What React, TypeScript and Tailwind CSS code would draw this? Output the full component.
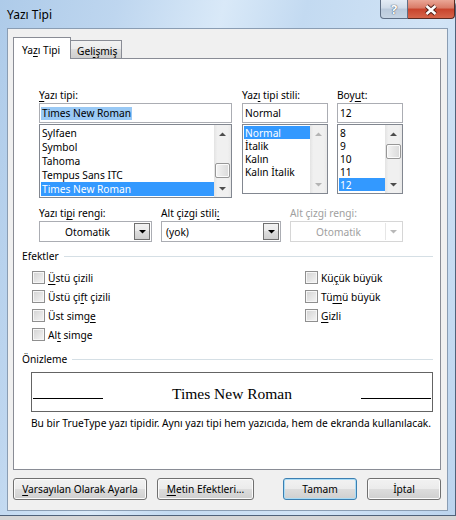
import React from "react";

const FONT = "font-['Noto_Sans',sans-serif]";

function U({ children }: { children: React.ReactNode }) {
  return <span className="underline underline-offset-[2px]">{children}</span>;
}

function Tri({ up = false, color = "#000" }: { up?: boolean; color?: string }) {
  return (
    <svg width="7" height="4" viewBox="0 0 7 4" className="block">
      <path d={up ? "M0 4L3.5 0.5L7 4Z" : "M0 0L7 0L3.5 3.5Z"} fill={color} />
    </svg>
  );
}

function ScrollBar({ thumbClass, disabled = false }: { thumbClass?: string; disabled?: boolean }) {
  const c = disabled ? "#b4b4b4" : "#4d4d4d";
  return (
    <div className="relative w-[17px] shrink-0 flex flex-col justify-between bg-[linear-gradient(to_right,#e3e3e3,#f0f0f0_20%,#f0f0f0_80%,#e8e8e8)]">
      <div className="h-[17px] flex items-center justify-center">
        <Tri up color={c} />
      </div>
      {thumbClass && (
        <div
          className={`absolute left-[1px] w-[15px] h-[15px] rounded-[2px] border border-[#979797] shadow-[inset_0_0_0_1px_#fbfbfb] bg-[linear-gradient(to_right,#f4f4f4,#e6e6e6_50%,#dadada)] ${thumbClass}`}
        />
      )}
      <div className="h-[17px] flex items-center justify-center">
        <Tri color={c} />
      </div>
    </div>
  );
}

function ListBox({
  items,
  selected,
  rowClass,
  heightClass,
  thumbClass,
  disabledBar,
}: {
  items: string[];
  selected: number;
  rowClass: string;
  heightClass: string;
  thumbClass?: string;
  disabledBar?: boolean;
}) {
  return (
    <div className={`mt-[1px] flex border border-[#828790] bg-white ${heightClass}`}>
      <div className="flex-1 min-w-0 pt-[1px] pl-[1px] overflow-hidden">
        {items.map((t, i) => (
          <div
            key={t}
            className={`${rowClass} flex items-center pl-[1px] whitespace-nowrap ${
              i === selected ? "bg-[#3399ff] text-white" : ""
            }`}
          >
            {t}
          </div>
        ))}
      </div>
      <ScrollBar thumbClass={thumbClass} disabled={disabledBar} />
    </div>
  );
}

function TextBox({ children }: { children: React.ReactNode }) {
  return (
    <div className="h-[20px] border border-[#abadb3] bg-white flex items-center pl-[1px] whitespace-nowrap">
      {children}
    </div>
  );
}

function Combo({
  text,
  center = false,
  disabled = false,
  className,
}: {
  text: string;
  center?: boolean;
  disabled?: boolean;
  className: string;
}) {
  return (
    <div
      className={`h-[21px] flex items-center p-[1px] bg-white border ${
        disabled ? "border-[#d6d6d6] text-[#a0a0a0]" : "border-[#abadb3]"
      } ${className}`}
    >
      <div className={`flex-1 ${center ? "text-center" : "pl-[3px]"}`}>{text}</div>
      {disabled ? (
        <div className="w-[16px] h-[17px] flex items-center justify-center border-l border-[#e6e6e6]">
          <Tri color="#b8b8b8" />
        </div>
      ) : (
        <div className="w-[16px] h-[17px] flex items-center justify-center border border-[#707070] bg-[linear-gradient(#f2f2f2,#ebebeb_45%,#dddddd_50%,#cfcfcf)]">
          <Tri />
        </div>
      )}
    </div>
  );
}

function GroupHeader({ children }: { children: React.ReactNode }) {
  return (
    <div className="w-[411px] h-[14px] flex items-center">
      <span>{children}</span>
      <div className="flex-1 h-px ml-[5px] bg-[#d5dfe5]" />
    </div>
  );
}

function Check({ children }: { children: React.ReactNode }) {
  return (
    <div className="h-[19px] flex items-center">
      <div className="w-[13px] h-[13px] border border-[#8f8f8f] shadow-[inset_0_0_0_1px_#f6f6f6] bg-[linear-gradient(135deg,#d2d2d2,#f5f5f5)]" />
      <span className="ml-[3px]">{children}</span>
    </div>
  );
}

function Btn({
  children,
  className,
  primary = false,
}: {
  children: React.ReactNode;
  className: string;
  primary?: boolean;
}) {
  return (
    <div
      className={`h-[22px] flex items-center justify-center rounded-[3px] border bg-[linear-gradient(#f2f2f2,#ebebeb_50%,#dddddd_50%,#cfcfcf)] ${
        primary
          ? "border-[#3c7fb1] shadow-[inset_0_0_0_1px_#a9dcf6]"
          : "border-[#707070] shadow-[inset_0_0_0_1px_#fbfbfb]"
      } ${className}`}
    >
      {children}
    </div>
  );
}

export default function App() {
  return (
    <div className={`w-[456px] h-[520px] bg-[#d6d6d6] ${FONT} text-[10.2px] leading-[14px] text-black`}>
      <div className="w-[456px] h-[516px] flex flex-col border-r border-b border-[#50627a] rounded-tr-[6px] bg-[linear-gradient(105deg,#aecbe9_0%,#bed6ef_20%,#d9e9f8_38%,#c3daf1_52%,#d2e4f6_75%,#bcd4ee_100%)]">
        {/* title bar */}
        <div className="h-[28px] flex items-start">
          <div className="flex-1 pl-[7px] pt-[6px] text-[12px] leading-[18px]">Yazı Tipi</div>
          <div className="w-[28px] h-[19px] flex items-center justify-center rounded-bl-[4px] border border-t-0 border-[#5f6f85] bg-[linear-gradient(#e4ecf5,#cfdbe8_45%,#b9c9db_50%,#c6d4e3)]">
            <span className="text-[13px] leading-[13px] font-bold text-white [text-shadow:0_0_1px_#3c4a5c,0_0_1px_#3c4a5c]">
              ?
            </span>
          </div>
          <div className="w-[47px] h-[19px] flex items-center justify-center rounded-br-[4px] border border-t-0 border-l-0 border-[#5a2a22] bg-[linear-gradient(#eaa696,#d97a66_45%,#c8432c_50%,#d6654b)]">
            <svg width="16" height="12" viewBox="0 0 16 12" className="mt-[1px]">
              <path d="M3.5 2L12.5 10M12.5 2L3.5 10" stroke="#4e1d15" strokeWidth="4.4" />
              <path d="M3.5 2L12.5 10M12.5 2L3.5 10" stroke="#ffffff" strokeWidth="2.6" />
            </svg>
          </div>
        </div>

        <div className="flex">
          <div className="w-[7px]" />
          <div className="w-[441px] h-[483px] border border-[#8a9db3] bg-[#f0f0f0] flex flex-col">
            {/* tabs */}
            <div className="mt-[8px] pl-[5px] h-[21px] flex items-end">
              <div className="relative z-10 -mb-px h-[22px] w-[58px] border border-b-0 border-[#898c95] bg-white pl-[8px] pt-[5px]">
                Ya<U>z</U>ı Tipi
              </div>
              <div className="-ml-px h-[18px] w-[52px] border border-b-0 border-[#898c95] bg-[linear-gradient(#f2f2f2,#ebebeb_50%,#dddddd_50%,#cfcfcf)] pl-[6px] pt-[3px]">
                Gel<U>i</U>şmiş
              </div>
            </div>

            {/* tab page */}
            <div className="ml-[5px] w-[428px] h-[412px] border border-[#898c95] bg-white pt-[29px] pl-[8px]">
              <div className="ml-[17px] flex items-start">
                <div className="w-[193px]">
                  <div className="h-[15px]">
                    <U>Y</U>azı tipi:
                  </div>
                  <TextBox>
                    <span className="bg-[#99c9f5] px-[1px] leading-[13px]">Times New Roman</span>
                  </TextBox>
                  <ListBox
                    items={["Sylfaen", "Symbol", "Tahoma", "Tempus Sans ITC", "Times New Roman"]}
                    selected={4}
                    rowClass="h-[14px]"
                    heightClass="h-[74px]"
                    thumbClass="top-[38px]"
                  />
                </div>
                <div className="ml-[10px] w-[86px]">
                  <div className="h-[15px]">
                    Yaz<U>ı</U> tipi stili:
                  </div>
                  <TextBox>
                    <span className="pl-[1px]">Normal</span>
                  </TextBox>
                  <ListBox
                    items={["Normal", "İtalik", "Kalın", "Kalın İtalik"]}
                    selected={0}
                    rowClass="h-[13px]"
                    heightClass="h-[70px]"
                    disabledBar
                  />
                </div>
                <div className="ml-[9px] w-[66px]">
                  <div className="h-[15px]">
                    Boy<U>u</U>t:
                  </div>
                  <TextBox>
                    <span className="pl-[1px]">12</span>
                  </TextBox>
                  <ListBox
                    items={["8", "9", "10", "11", "12"]}
                    selected={4}
                    rowClass="h-[13px]"
                    heightClass="h-[70px]"
                    thumbClass="top-[19px]"
                  />
                </div>
              </div>

              <div className="ml-[17px] mt-[8px] flex">
                <div className="w-[113px]">
                  <div className="h-[15px]">
                    Yazı ti<U>p</U>i rengi:
                  </div>
                  <Combo text="Otomatik" center className="w-[113px]" />
                </div>
                <div className="ml-[9px] w-[120px]">
                  <div className="h-[15px]">
                    Alt çizgi stili<U>:</U>
                  </div>
                  <Combo text="(yok)" className="w-[120px]" />
                </div>
                <div className="ml-[9px] w-[113px]">
                  <div className="h-[15px] text-[#a0a0a0]">Alt çizgi rengi:</div>
                  <Combo text="Otomatik" center disabled className="w-[113px]" />
                </div>
              </div>

              <div className="mt-[7px]">
                <GroupHeader>Efektler</GroupHeader>
              </div>
              <div className="ml-[10px] mt-[5px] flex">
                <div className="w-[273px]">
                  <Check>
                    <U>Ü</U>stü çizili
                  </Check>
                  <Check>
                    Üstü çi<U>f</U>t çizili
                  </Check>
                  <Check>
                    Üst simg<U>e</U>
                  </Check>
                  <Check>
                    Al<U>t</U> simge
                  </Check>
                </div>
                <div>
                  <Check>
                    Kü<U>ç</U>ük büyük
                  </Check>
                  <Check>
                    Tü<U>m</U>ü büyük
                  </Check>
                  <Check>
                    <U>G</U>izli
                  </Check>
                </div>
              </div>

              <div className="mt-[8px]">
                <GroupHeader>Önizleme</GroupHeader>
              </div>
              <div className="ml-[9px] mt-[6px] w-[402px] h-[40px] border border-[#646464] flex items-end justify-between px-[1px] pb-[12px]">
                <div className="w-[70px] h-px bg-black" />
                <span className="font-['Liberation_Serif',serif] text-[15.5px] leading-[16px] -mb-[3px]">
                  Times New Roman
                </span>
                <div className="w-[70px] h-px bg-black" />
              </div>
              <div className="ml-[9px] mt-[4px] whitespace-nowrap">
                Bu bir TrueType yazı tipidir. Aynı yazı tipi hem yazıcıda, hem de ekranda kullanılacak.
              </div>
            </div>

            {/* buttons */}
            <div className="mt-[8px] pl-[5px] flex">
              <Btn className="w-[134px]">
                <span>
                  <U>V</U>arsayılan Olarak Ayarla
                </span>
              </Btn>
              <Btn className="ml-[10px] w-[97px]">
                <span>
                  <U>M</U>etin Efektleri...
                </span>
              </Btn>
              <Btn primary className="ml-[29px] w-[74px]">
                Tamam
              </Btn>
              <Btn className="ml-[10px] w-[74px]">İptal</Btn>
            </div>
          </div>
        </div>
      </div>
    </div>
  );
}
